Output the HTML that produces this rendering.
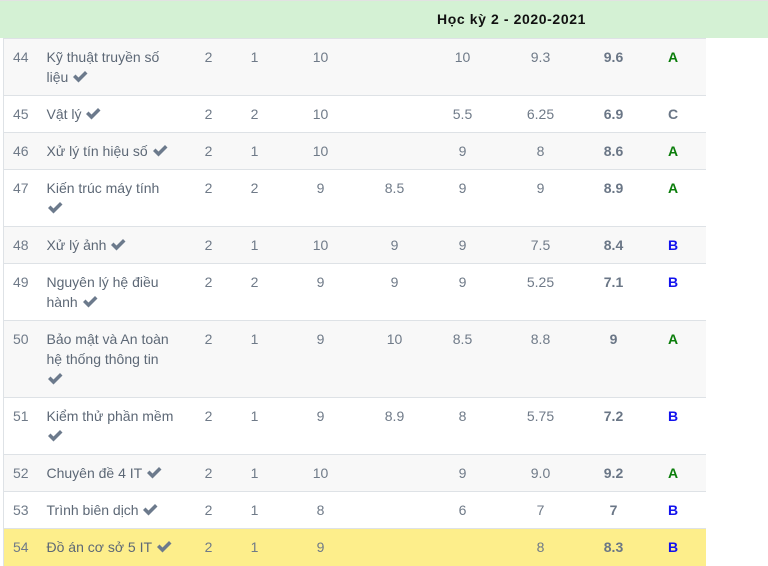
<!DOCTYPE html>
<html><head><meta charset="utf-8"><style>
html,body{margin:0;padding:0;width:768px;height:563px;overflow:hidden;background:#fff;font-family:"Liberation Sans","DejaVu Sans",sans-serif;}
.hdr{position:absolute;left:0;top:0;width:768px;height:38px;background:#d4f1d4;border-top:1px solid #e2e2e2;box-sizing:border-box;}
.hdr span{position:absolute;left:437px;top:10px;font-weight:bold;font-size:14px;letter-spacing:0.6px;color:#111;}
table{position:absolute;left:3px;top:38px;width:702px;border-collapse:collapse;table-layout:fixed;font-size:14px;color:#6f7a88;}
td{vertical-align:top;padding:8px 0 0 0;line-height:20px;text-align:center;border-top:1px solid #dee2e6;}
td.n{text-align:left;padding-left:9px;}
td.nm{text-align:left;padding-left:8px;color:#5d6876;}
td.b{font-weight:bold;color:#6a7686;}
.A{color:#0a7d0a;font-weight:bold}.B{color:#1212ee;font-weight:bold}.C{color:#6a7686;font-weight:bold}
tr.g{background:#f8f8f8}tr.y{background:#fdee8b}
svg{vertical-align:-1px}
table{border-left:1px solid #dee2e6}
</style></head><body>
<div class="hdr"><span>Học kỳ 2 - 2020-2021</span></div>
<table>
<colgroup><col style="width:35px"><col style="width:152px"><col style="width:36px"><col style="width:56px"><col style="width:76px"><col style="width:72px"><col style="width:64px"><col style="width:92px"><col style="width:54px"><col style="width:65px"></colgroup>
<tr class="g" style="height:57px"><td class="n">44</td><td class="nm">Kỹ thuật truyền số<br>liệu <svg width="16" height="13" viewBox="0 0 16 13"><path d="M1 7l2.5-2.5 3 3L13 1l2.5 2.5-9 9z" fill="#6c7a8c"/></svg></td><td>2</td><td>1</td><td>10</td><td></td><td>10</td><td>9.3</td><td class="b">9.6</td><td><span class="A">A</span></td></tr>
<tr style="height:37px"><td class="n">45</td><td class="nm">Vật lý <svg width="16" height="13" viewBox="0 0 16 13"><path d="M1 7l2.5-2.5 3 3L13 1l2.5 2.5-9 9z" fill="#6c7a8c"/></svg></td><td>2</td><td>2</td><td>10</td><td></td><td>5.5</td><td>6.25</td><td class="b">6.9</td><td><span class="C">C</span></td></tr>
<tr class="g" style="height:37px"><td class="n">46</td><td class="nm">Xử lý tín hiệu số <svg width="16" height="13" viewBox="0 0 16 13"><path d="M1 7l2.5-2.5 3 3L13 1l2.5 2.5-9 9z" fill="#6c7a8c"/></svg></td><td>2</td><td>1</td><td>10</td><td></td><td>9</td><td>8</td><td class="b">8.6</td><td><span class="A">A</span></td></tr>
<tr style="height:57px"><td class="n">47</td><td class="nm">Kiến trúc máy tính<br><svg width="16" height="13" viewBox="0 0 16 13"><path d="M1 7l2.5-2.5 3 3L13 1l2.5 2.5-9 9z" fill="#6c7a8c"/></svg></td><td>2</td><td>2</td><td>9</td><td>8.5</td><td>9</td><td>9</td><td class="b">8.9</td><td><span class="A">A</span></td></tr>
<tr class="g" style="height:37px"><td class="n">48</td><td class="nm">Xử lý ảnh <svg width="16" height="13" viewBox="0 0 16 13"><path d="M1 7l2.5-2.5 3 3L13 1l2.5 2.5-9 9z" fill="#6c7a8c"/></svg></td><td>2</td><td>1</td><td>10</td><td>9</td><td>9</td><td>7.5</td><td class="b">8.4</td><td><span class="B">B</span></td></tr>
<tr style="height:57px"><td class="n">49</td><td class="nm">Nguyên lý hệ điều<br>hành <svg width="16" height="13" viewBox="0 0 16 13"><path d="M1 7l2.5-2.5 3 3L13 1l2.5 2.5-9 9z" fill="#6c7a8c"/></svg></td><td>2</td><td>2</td><td>9</td><td>9</td><td>9</td><td>5.25</td><td class="b">7.1</td><td><span class="B">B</span></td></tr>
<tr class="g" style="height:77px"><td class="n">50</td><td class="nm">Bảo mật và An toàn<br>hệ thống thông tin<br><svg width="16" height="13" viewBox="0 0 16 13"><path d="M1 7l2.5-2.5 3 3L13 1l2.5 2.5-9 9z" fill="#6c7a8c"/></svg></td><td>2</td><td>1</td><td>9</td><td>10</td><td>8.5</td><td>8.8</td><td class="b">9</td><td><span class="A">A</span></td></tr>
<tr style="height:57px"><td class="n">51</td><td class="nm">Kiểm thử phần mềm<br><svg width="16" height="13" viewBox="0 0 16 13"><path d="M1 7l2.5-2.5 3 3L13 1l2.5 2.5-9 9z" fill="#6c7a8c"/></svg></td><td>2</td><td>1</td><td>9</td><td>8.9</td><td>8</td><td>5.75</td><td class="b">7.2</td><td><span class="B">B</span></td></tr>
<tr class="g" style="height:37px"><td class="n">52</td><td class="nm">Chuyên đề 4 IT <svg width="16" height="13" viewBox="0 0 16 13"><path d="M1 7l2.5-2.5 3 3L13 1l2.5 2.5-9 9z" fill="#6c7a8c"/></svg></td><td>2</td><td>1</td><td>10</td><td></td><td>9</td><td>9.0</td><td class="b">9.2</td><td><span class="A">A</span></td></tr>
<tr style="height:37px"><td class="n">53</td><td class="nm">Trình biên dịch <svg width="16" height="13" viewBox="0 0 16 13"><path d="M1 7l2.5-2.5 3 3L13 1l2.5 2.5-9 9z" fill="#6c7a8c"/></svg></td><td>2</td><td>1</td><td>8</td><td></td><td>6</td><td>7</td><td class="b">7</td><td><span class="B">B</span></td></tr>
<tr class="y" style="height:37px"><td class="n">54</td><td class="nm">Đồ án cơ sở 5 IT <svg width="16" height="13" viewBox="0 0 16 13"><path d="M1 7l2.5-2.5 3 3L13 1l2.5 2.5-9 9z" fill="#6c7a8c"/></svg></td><td>2</td><td>1</td><td>9</td><td></td><td></td><td>8</td><td class="b">8.3</td><td><span class="B">B</span></td></tr>
</table>
</body></html>
